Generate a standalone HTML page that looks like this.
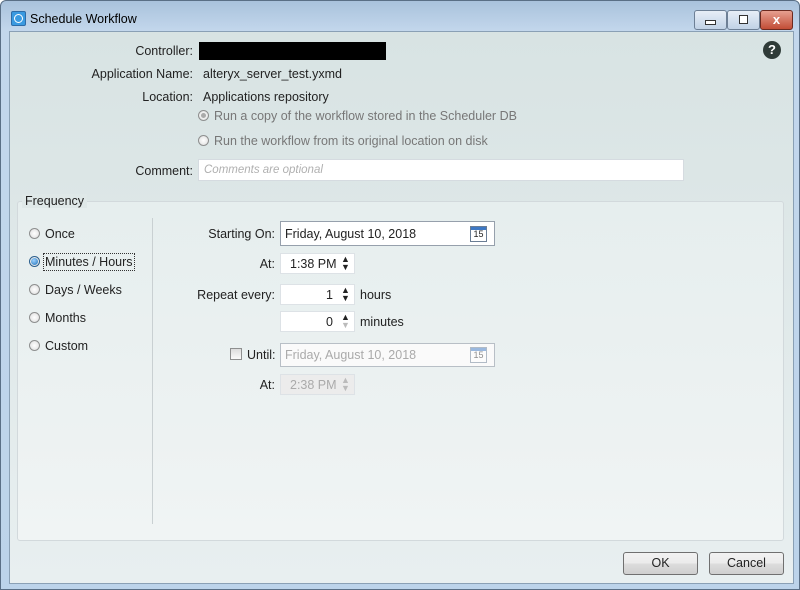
<!DOCTYPE html>
<html><head><style>
body{margin:0;width:800px;height:590px;overflow:hidden;font-family:"Liberation Sans",sans-serif;font-size:12.5px;color:#222;}
.win{position:absolute;left:0;top:0;width:798px;height:588px;border:1px solid #5a6f86;border-radius:6px 6px 0 0;background:linear-gradient(#a9c2dc,#c3d7ec 30px,#bcd3ea);}
.client{position:absolute;left:8px;top:30px;width:783px;height:551px;background:linear-gradient(#d8e3e3,#e8eff0);border:1px solid #8aa0b5;}
.t{position:absolute;white-space:nowrap;}
.r{text-align:right;}
.box{position:absolute;background:#fff;border:1px solid #abadb3;box-sizing:border-box;}
.rad{position:absolute;width:11px;height:11px;border-radius:50%;border:1px solid #8e8f8f;background:radial-gradient(#fff,#dcdcdc);box-sizing:border-box;}
.btn{position:absolute;border:1px solid #707070;border-radius:3px;background:linear-gradient(#f2f2f2,#ebebeb 50%,#dddddd 50%,#cfcfcf);text-align:center;line-height:20px;box-sizing:border-box;}
.spin{position:absolute;font-size:9px;line-height:8px;width:9px;text-align:center;}
.cal{position:absolute;width:17px;height:16px;border:1px solid #6a7d94;background:#fff;box-sizing:border-box;font-size:9px;text-align:center;line-height:15px;}
.cal:before{content:"";position:absolute;left:0;top:0;right:0;height:3px;background:#3d78c4;}
.gray{color:#a0a0a0;}
</style></head><body>
<div class="win">
 <div style="position:absolute;left:10px;top:10px;width:13px;height:13px;border:1px solid #2d6ca8;background:#3a9ae0;border-radius:2px"><div style="margin:2px;width:7px;height:7px;border:1px solid #fff;border-radius:50%"></div></div>
 <div class="t" style="left:29px;top:11px;font-size:12.5px;color:#000">Schedule Workflow</div>
 <div style="position:absolute;left:693px;top:9px;width:31px;height:18px;border:1px solid #6d7f95;border-radius:3px;background:linear-gradient(#e7eef7,#c1d2e6)"><div style="margin:9px auto 0;width:9px;height:3px;border:1px solid #333;background:#fff"></div></div>
 <div style="position:absolute;left:726px;top:9px;width:31px;height:18px;border:1px solid #6d7f95;border-radius:3px;background:linear-gradient(#e7eef7,#c1d2e6)"><div style="margin:4px auto 0;width:7px;height:7px;border:1px solid #333;background:#fff"></div></div>
 <div style="position:absolute;left:759px;top:9px;width:31px;height:18px;border:1px solid #6b2a20;border-radius:3px;background:linear-gradient(#e6a091,#c24d36);color:#fff;font-weight:bold;text-align:center;line-height:18px;font-size:13px">x</div>
 <div class="client"></div>
</div>
<div class="t r" style="left:60px;width:133px;top:44px">Controller:</div>
<div style="position:absolute;left:199px;top:42px;width:187px;height:18px;background:#000"></div>
<div style="position:absolute;left:763px;top:41px;width:18px;height:18px;border-radius:50%;background:#2f3b38;color:#fff;font-weight:bold;text-align:center;line-height:18px;font-size:13px">?</div>
<div class="t r" style="left:40px;width:153px;top:67px">Application Name:</div>
<div class="t" style="left:203px;top:67px">alteryx_server_test.yxmd</div>
<div class="t r" style="left:60px;width:133px;top:90px">Location:</div>
<div class="t" style="left:203px;top:90px">Applications repository</div>
<div class="rad" style="left:198px;top:110px"><div style="margin:2px;width:5px;height:5px;border-radius:50%;background:#aaa"></div></div>
<div class="t gray" style="left:214px;top:109px;color:#777">Run a copy of the workflow stored in the Scheduler DB</div>
<div class="rad" style="left:198px;top:135px"></div>
<div class="t" style="left:214px;top:134px;color:#777">Run the workflow from its original location on disk</div>
<div class="t r" style="left:60px;width:133px;top:164px">Comment:</div>
<div class="box" style="left:198px;top:159px;width:486px;height:22px;border-color:#d5dbe0"></div>
<div class="t gray" style="left:204px;top:164px;font-style:italic;font-size:11.5px;color:#b0b0b0">Comments are optional</div>
<div style="position:absolute;left:17px;top:201px;width:765px;height:338px;border:1px solid #d2d9dc;border-radius:3px;background:linear-gradient(#e6eeee,#f0f4f4)"></div>
<div class="t" style="left:22px;top:194px;background:#dfe8e8;padding:0 3px">Frequency</div>
<div style="position:absolute;left:152px;top:218px;width:1px;height:306px;background:#c9d0d2"></div>
<div class="rad" style="left:29px;top:228px"></div><div class="t" style="left:45px;top:227px">Once</div>
<div class="rad" style="left:29px;top:256px;border-color:#2b5f8d"><div style="margin:1px;width:7px;height:7px;border-radius:50%;background:radial-gradient(circle at 40% 35%,#9fd3ff,#1c6fb8)"></div></div>
<div class="t" style="left:43px;top:253px;border:1px dotted #333;padding:1px 1px">Minutes / Hours</div>
<div class="rad" style="left:29px;top:284px"></div><div class="t" style="left:45px;top:283px">Days / Weeks</div>
<div class="rad" style="left:29px;top:312px"></div><div class="t" style="left:45px;top:311px">Months</div>
<div class="rad" style="left:29px;top:340px"></div><div class="t" style="left:45px;top:339px">Custom</div>

<div class="t r" style="left:160px;width:115px;top:227px">Starting On:</div>
<div class="box" style="left:280px;top:221px;width:215px;height:25px;border-color:#96a0ac"></div>
<div class="t" style="left:285px;top:227px">Friday, August 10, 2018</div>
<div class="cal" style="left:470px;top:226px">15</div>
<div class="t r" style="left:160px;width:115px;top:257px">At:</div>
<div class="box" style="left:280px;top:253px;width:75px;height:21px;border-color:#dde2e6"></div>
<div class="t" style="left:290px;top:257px">1:38 PM</div>
<div class="spin" style="left:341px;top:255px">▲<br>▼</div>
<div class="t r" style="left:160px;width:115px;top:288px">Repeat every:</div>
<div class="box" style="left:280px;top:284px;width:75px;height:21px;border-color:#dde2e6"></div>
<div class="t" style="left:326px;top:288px">1</div>
<div class="spin" style="left:341px;top:286px">▲<br>▼</div>
<div class="t" style="left:360px;top:288px">hours</div>
<div class="box" style="left:280px;top:311px;width:75px;height:21px;border-color:#dde2e6"></div>
<div class="t" style="left:326px;top:315px">0</div>
<div class="spin" style="left:341px;top:313px">▲<br><span style="color:#bbb">▼</span></div>
<div class="t" style="left:360px;top:315px">minutes</div>
<div style="position:absolute;left:230px;top:348px;width:12px;height:12px;border:1px solid #8e8f8f;background:linear-gradient(#ddd,#fafafa);box-sizing:border-box"></div>
<div class="t" style="left:247px;top:348px">Until:</div>
<div class="box" style="left:280px;top:343px;width:215px;height:24px;border-color:#b8bfc6;background:#fafafa"></div>
<div class="t gray" style="left:285px;top:348px;color:#aaa">Friday, August 10, 2018</div>
<div class="cal" style="left:470px;top:347px;opacity:.5">15</div>
<div class="t r" style="left:160px;width:115px;top:378px">At:</div>
<div class="box" style="left:280px;top:374px;width:75px;height:21px;border-color:#dde2e6;background:#ececec"></div>
<div class="t" style="left:290px;top:378px;color:#aaa">2:38 PM</div>
<div class="spin" style="left:341px;top:376px;color:#bbb">▲<br>▼</div>

<div class="btn" style="left:623px;top:552px;width:75px;height:23px">OK</div>
<div class="btn" style="left:709px;top:552px;width:75px;height:23px">Cancel</div>
</body></html>
